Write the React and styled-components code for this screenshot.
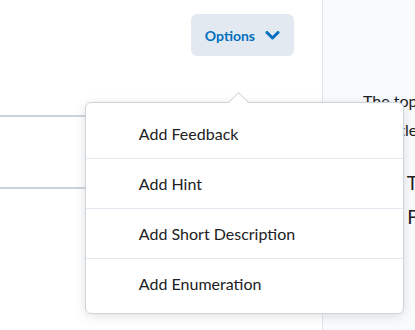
import React from 'react';
import styled, { createGlobalStyle } from 'styled-components';

const Global = createGlobalStyle`
    html, body {
        margin: 0;
        padding: 0;
        background: #ffffff;
        font-family: Lato, "Noto Sans", sans-serif;
        color: #202122;
    }
`

const Page = styled.div`
    display: flex;
    width: 415px;
    height: 330px;
    overflow: hidden;
`

const Editor = styled.div`
    flex: 0 0 322px;
    border-right: 1px solid #dfe3e8;
    background: #ffffff;
    display: flex;
    flex-direction: column;
`

const Header = styled.div`
    display: flex;
    justify-content: flex-end;
    padding: 14px 28px 0 0;
`

const Dropdown = styled.div`
    position: relative;
`

const OptionsButton = styled.button`
    display: flex;
    align-items: center;
    gap: 10px;
    height: 42px;
    padding: 0 14px;
    border: none;
    border-radius: 6px;
    background: #e3e9f1;
    color: #006fbf;
    font-family: Lato, sans-serif;
    font-weight: 700;
    font-size: 14px;
    cursor: pointer;
`

const Menu = styled.div`
    position: absolute;
    top: 88px;
    left: -106px;
    width: 317px;
    padding: 5px 0;
    background: #ffffff;
    border: 1px solid #cdd5dc;
    border-radius: 6px;
    box-shadow: 0 2px 12px rgba(0, 0, 0, 0.12);
    z-index: 10;

    &::before {
        content: '';
        position: absolute;
        top: -8px;
        left: 145px;
        width: 14px;
        height: 14px;
        background: #ffffff;
        border-top: 1px solid #cdd5dc;
        border-left: 1px solid #cdd5dc;
        transform: rotate(45deg);
    }
`

const MenuItem = styled.div`
    position: relative;
    box-sizing: border-box;
    height: 50px;
    display: flex;
    align-items: center;
    padding-left: 53px;
    font-size: 16px;
    color: #202122;
    border-top: ${p => (p.first ? 'none' : '1px solid #e3e9f1')};
`

const Field = styled.div`
    margin-top: 59px;
    height: 70px;
    border-top: 2px solid #cdd5dc;
    border-bottom: 2px solid #cdd5dc;
`

const Preview = styled.div`
    flex: 1;
    background: #f9fafb;
    padding: 86px 0 0 40px;
    overflow: hidden;
    white-space: nowrap;
`

const Para = styled.p`
    margin: 0 0 ${p => p.gap}px;
    font-size: ${p => p.size}px;
    line-height: ${p => p.lh}px;
`

const Chevron = () => (
    <svg width="15" height="9" viewBox="0 0 15 9">
        <path d="M2 1.5 L7.5 7 L13 1.5" fill="none" stroke="#006fbf" strokeWidth="3" strokeLinecap="round" strokeLinejoin="round" />
    </svg>
)

const items = ['Add Feedback', 'Add Hint', 'Add Short Description', 'Add Enumeration']

export default function App() {
    return (
        <Page>
            <Global />
            <Editor>
                <Header>
                    <Dropdown>
                        <OptionsButton>
                            Options
                            <Chevron />
                        </OptionsButton>
                        <Menu>
                            {items.map((t, i) => (
                                <MenuItem key={t} first={i === 0}>{t}</MenuItem>
                            ))}
                        </Menu>
                    </Dropdown>
                </Header>
                <Field />
            </Editor>
            <Preview>
                <Para size={16} lh={29} gap={0}>The top of the question</Para>
                <Para size={16} lh={29} gap={22}>Subtitle of the page</Para>
                <Para size={19} lh={34} gap={0}>Now True</Para>
                <Para size={19} lh={34} gap={0}>Now False</Para>
            </Preview>
        </Page>
    )
}
